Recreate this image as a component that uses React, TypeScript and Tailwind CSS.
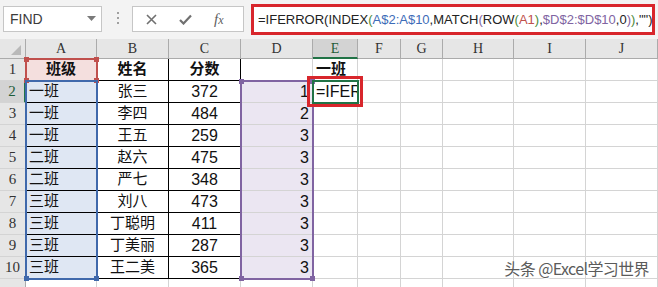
import React from "react";

const cols = [
  { w: "w-[71px]", align: "justify-start pl-[3px]", dark: true },
  { w: "w-[72px]", align: "justify-center", dark: true },
  { w: "w-[72px]", align: "justify-center", dark: true },
  { w: "w-[72px]", align: "justify-end pr-[3px]", dark: false },
  { w: "w-[45px]", align: "justify-start pl-[3px]", dark: false },
  { w: "w-[43px]", align: "justify-start", dark: false },
  { w: "w-[42px]", align: "justify-start", dark: false },
  { w: "w-[71px]", align: "justify-start", dark: false },
  { w: "w-[72px]", align: "justify-start", dark: false },
  { w: "w-[72px]", align: "justify-start", dark: false },
];

const letters = ["A", "B", "C", "D", "E", "F", "G", "H", "I", "J"];

const data = [
  ["班级", "姓名", "分数", "", "一班"],
  ["一班", "张三", "372", "1", "=IFER"],
  ["一班", "李四", "484", "2"],
  ["一班", "王五", "259", "3"],
  ["二班", "赵六", "475", "3"],
  ["二班", "严七", "348", "3"],
  ["三班", "刘八", "473", "3"],
  ["三班", "丁聪明", "411", "3"],
  ["三班", "丁美丽", "287", "3"],
  ["三班", "王二美", "365", "3"],
  [],
];

function cellBg(r: number, c: number) {
  if (r === 0 && c === 0) return "bg-[#f4dfde]";
  if (r > 0 && r < 10 && c === 0) return "bg-[#dfe7f3]";
  if (r > 0 && r < 10 && c === 3) return "bg-[#ebe6f2]";
  return "bg-white";
}

function Handle({ className }: { className: string }) {
  return <div className={"absolute h-[5px] w-[5px] " + className} />;
}

function Toolbar() {
  return (
    <div className="relative flex h-[39px] items-start bg-[#f3f3f3]">
      <div className="ml-[3px] mt-[6px] flex h-[26px] w-[99px] items-center justify-between border border-[#c6c6c6] bg-white pl-[6px] pr-[5px] text-[14px] text-[#3c3c3c]">
        <span>FIND</span>
        <svg width="9" height="6" viewBox="0 0 9 6">
          <path d="M0 0 L9 0 L4.5 5 Z" fill="#7a7a7a" />
        </svg>
      </div>
      <div className="ml-[15px] mt-[12px] flex flex-col gap-[3px]">
        <span className="h-[2px] w-[2px] bg-[#a0a0a0]" />
        <span className="h-[2px] w-[2px] bg-[#a0a0a0]" />
        <span className="h-[2px] w-[2px] bg-[#a0a0a0]" />
      </div>
      <div className="ml-[13px] mt-[6px] flex h-[26px] w-[112px] items-center border border-[#c6c6c6] bg-white">
        <svg className="ml-[13px]" width="11" height="11" viewBox="0 0 11 11">
          <path d="M1 1 L10 10 M10 1 L1 10" stroke="#707070" strokeWidth="1.6" />
        </svg>
        <svg className="ml-[22px]" width="13" height="11" viewBox="0 0 13 11">
          <path d="M1 6 L4.5 9.5 L12 1.5" stroke="#707070" strokeWidth="2.2" fill="none" />
        </svg>
        <span className="ml-[22px] font-['Liberation_Serif'] text-[15px] italic text-[#606060]">
          f<span className="text-[12px]">x</span>
        </span>
      </div>
      <div className="ml-[7px] mt-[4px] flex h-[31px] w-[404px] items-center border-[3px] border-[#d8262c] bg-white pl-[4px] text-[13px] text-[#222]">
        <span>=IFERROR(INDEX</span>
        <span className="text-[#4a8a3a]">(</span>
        <span className="text-[#3d6cb8]">A$2:A$10</span>
        <span>,MATCH</span>
        <span className="text-[#8064a2]">(</span>
        <span>ROW</span>
        <span className="text-[#4a8a3a]">(</span>
        <span className="text-[#c0504d]">A1</span>
        <span className="text-[#4a8a3a]">)</span>
        <span>,</span>
        <span className="text-[#8064a2]">$D$2:$D$10</span>
        <span>,0</span>
        <span className="text-[#8064a2]">)</span>
        <span className="text-[#4a8a3a]">)</span>
        <span>,"")</span>
      </div>
    </div>
  );
}

function HeaderRow() {
  return (
    <div className="flex h-[20px]">
      <div className="relative w-[26px] border-r border-b border-[#ababab] bg-[#e6e6e6]">
        <svg className="absolute right-[4px] bottom-[3px]" width="10" height="10" viewBox="0 0 10 10">
          <path d="M10 0 L10 10 L0 10 Z" fill="#b9b9b9" />
        </svg>
      </div>
      {cols.map((c, i) => (
        <div
          key={i}
          className={
            c.w +
            " flex items-center justify-center border-r font-['Liberation_Serif'] text-[14px] " +
            (i === 4
              ? "border-b-2 border-r-[#ababab] border-b-[#217346] bg-[#d3d3d3] text-[#1d5c38]"
              : "border-b border-[#ababab] bg-[#e6e6e6] text-[#333]")
          }
        >
          {letters[i]}
        </div>
      ))}
    </div>
  );
}

function Row({ r }: { r: number }) {
  const row = data[r];
  return (
    <div className="flex h-[22px]">
      <div
        className={
          "flex w-[26px] items-center justify-center border-b border-[#d4d4d4] font-['Liberation_Serif'] text-[15px] " +
          (r === 1
            ? "border-r-2 border-r-[#217346] bg-[#d3d3d3] text-[#1d5c38]"
            : "border-r border-r-[#ababab] bg-[#e6e6e6] text-[#333]")
        }
      >
        {r < 10 ? r + 1 : ""}
      </div>
      {cols.map((c, i) => {
        const v = row[i] ?? "";
        const bold = r === 0 && (i < 3 || i === 4);
        const isNum = /^[=0-9]/.test(v);
        const align = r === 0 && i === 0 ? "justify-center" : c.align;
        return (
          <div
            key={i}
            className={
              c.w +
              " flex items-center overflow-visible whitespace-nowrap border-r border-b " +
              (c.dark && r < 10 ? "border-black " : "border-[#d4d4d4] ") +
              align +
              " " +
              cellBg(r, i) +
              (bold ? " font-bold" : "") +
              (isNum ? " text-[16px] font-['Liberation_Sans']" : " text-[15px]")
            }
          >
            {v}
            {r === 1 && i === 4 && <span className="ml-[1px] h-[16px] w-px bg-black" />}
          </div>
        );
      })}
    </div>
  );
}

export default function App() {
  return (
    <div className="relative h-[287px] w-[658px] overflow-hidden bg-white font-['Liberation_Sans','Noto_Sans_CJK_SC',sans-serif] text-[#111]">
      <Toolbar />
      <div className="relative">
        <HeaderRow />
        {data.map((_, r) => (
          <Row key={r} r={r} />
        ))}

        {/* reference highlights */}
        <div className="absolute left-[25px] top-[19px] h-[24px] w-[73px] border-2 border-[#c0504d]">
          <Handle className="-left-[3px] -top-[3px] bg-[#c0504d]" />
          <Handle className="-right-[3px] -top-[3px] bg-[#c0504d]" />
          <Handle className="-left-[3px] -bottom-[3px] bg-[#c0504d]" />
          <Handle className="-right-[3px] -bottom-[3px] bg-[#c0504d]" />
        </div>
        <div className="absolute left-[25px] top-[41px] h-[200px] w-[73px] border-2 border-[#4069ab]">
          <Handle className="-right-[3px] -bottom-[3px] bg-[#4069ab]" />
          <Handle className="-left-[3px] -bottom-[3px] bg-[#4069ab]" />
        </div>
        <div className="absolute left-[240px] top-[41px] h-[200px] w-[74px] border-2 border-[#8064a2]">
          <Handle className="-left-[3px] -top-[3px] bg-[#8064a2]" />
          <Handle className="-right-[3px] -top-[3px] bg-[#8064a2]" />
          <Handle className="-left-[3px] -bottom-[3px] bg-[#8064a2]" />
          <Handle className="-right-[3px] -bottom-[3px] bg-[#8064a2]" />
        </div>
        <div className="absolute left-[312px] top-[41px] h-[24px] w-[47px] border-2 border-[#217346]" />
        <div className="absolute left-[307px] top-[37px] h-[31px] w-[56px] border-[3px] border-[#d8262c]" />
      </div>

      <div className="absolute bottom-[7px] right-[9px] font-['Noto_Sans_CJK_SC',sans-serif] text-[16px] tracking-[-0.6px] text-[#5b5b5b] [text-shadow:0_0_2px_#fff,1px_1px_0_#fff]">
        头条 @Excel学习世界
      </div>
    </div>
  );
}
